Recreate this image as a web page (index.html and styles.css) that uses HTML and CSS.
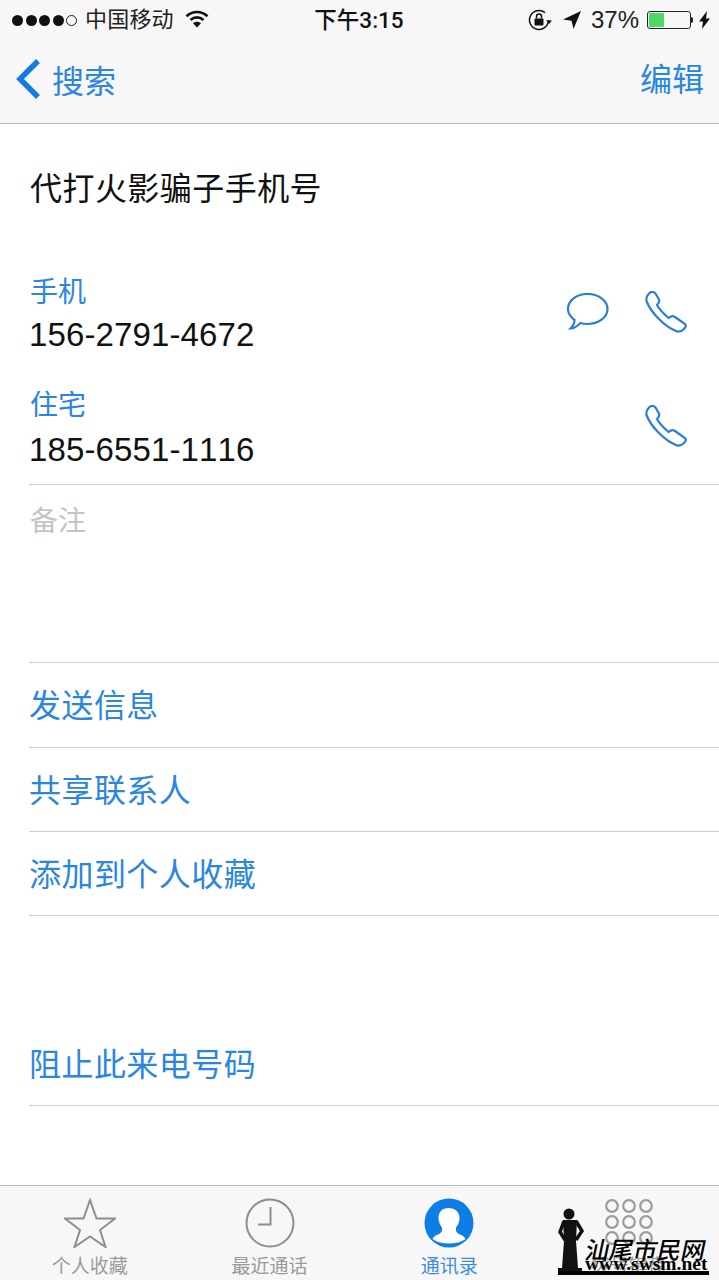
FILE: index.html
```html
<!DOCTYPE html>
<html lang="zh-CN">
<head>
<meta charset="utf-8">
<title>联系人</title>
<link rel="stylesheet" href="styles.css">
</head>
<body>
<div class="page">
  <header class="topbar">
    <div class="status">
      <div class="status-left">
        <span class="dots"><i class="dot"></i><i class="dot"></i><i class="dot"></i><i class="dot"></i><i class="dot hollow"></i></span>
        <span class="carrier">中国移动</span>
        <svg class="wifi" width="24" height="18" viewBox="0 0 24 18"><path d="M1.500 6.200C7.500.6 16.500.6 22.500 6.200" class="wifi-arc"/><path d="M5.500 10C9.300 6.500 14.700 6.500 18.500 10" class="wifi-arc"/><path d="M12 17.500 8 13.200C10.300 11.200 13.700 11.200 16 13.200Z" class="wifi-fill"/></svg>
      </div>
      <span class="time">下午3:15</span>
      <div class="status-right">
        <svg class="lock" width="24" height="22" viewBox="0 0 24 22"><path d="M20.500 11A9.500 9.500 0 1 1 17 3.600" class="lock-ring"/><path d="M18 11.500h6L21 15Z" class="ink"/><rect x="6.500" y="9.500" width="9" height="7" rx="1" class="ink"/><path d="M8.500 9.500V7.500a2.500 2.500 0 0 1 5 0v2" class="lock-ring"/></svg>
        <svg class="arrow" width="18" height="18" viewBox="0 0 18 18"><path d="M18 0 0 8.500l8.500 1.200L10.500 18Z" class="ink"/></svg>
        <span class="percent">37%</span>
        <span class="battery"><span class="battery-level"></span></span>
        <span class="battery-tip"></span>
        <svg class="bolt" width="11" height="18" viewBox="0 0 11 18"><path d="M8 0 0 10.500h4L3 18l8-10.500H7Z" class="ink"/></svg>
      </div>
    </div>
    <nav class="nav">
      <a class="back">
        <svg width="26" height="42" viewBox="0 0 26 42"><path d="M23 3 5 21l18 18" class="chevron"/></svg>
        <span>搜索</span>
      </a>
      <a class="edit">编辑</a>
    </nav>
  </header>

  <main class="main">
    <h1 class="name">代打火影骗子手机号</h1>

    <section class="phones">
      <div class="phone">
        <div class="phone-text">
          <div class="label">手机</div>
          <div class="number">156-2791-4672</div>
        </div>
        <svg class="bubble" width="42" height="38" viewBox="0 0 42 38"><path d="M20.500 1C31.500 1 40.500 7.500 40.500 16C40.500 24.500 31.500 31 20.500 31C17.500 31 15 30.600 13.500 30C10.500 33 6.500 35.500 3.500 35.500C6 33 7.500 30 7.500 27C3.500 24 1 20 1 16C1 7.500 9.500 1 20.500 1Z" class="icon-line"/></svg>
        <svg class="call" width="44" height="44" viewBox="0 0 44 44"><path d="M4 2.500C6 .5 9 .5 10.500 2.500L14 8.500C15 10.500 13.500 12.500 12 14C14 18 19 23 23.500 27C26 25 28 24.500 30 26L40 33C41.500 34.500 41 36 39 38C37 40 35 41 32 40.500C20 36 6 22 1.500 10C1 7 2 4.500 4 2.500Z" class="icon-line"/></svg>
      </div>
      <div class="phone">
        <div class="phone-text">
          <div class="label">住宅</div>
          <div class="number">185-6551-1116</div>
        </div>
        <svg class="call" width="44" height="44" viewBox="0 0 44 44"><path d="M4 2.500C6 .5 9 .5 10.500 2.500L14 8.500C15 10.500 13.500 12.500 12 14C14 18 19 23 23.500 27C26 25 28 24.500 30 26L40 33C41.500 34.500 41 36 39 38C37 40 35 41 32 40.500C20 36 6 22 1.500 10C1 7 2 4.500 4 2.500Z" class="icon-line"/></svg>
      </div>
    </section>

    <section class="notes">备注</section>

    <ul class="actions">
      <li class="action first">发送信息</li>
      <li class="action">共享联系人</li>
      <li class="action">添加到个人收藏</li>
    </ul>

    <div class="action block">阻止此来电号码</div>
  </main>

  <footer class="tabs">
    <div class="tab">
      <svg width="52" height="50" viewBox="0 0 52 50"><path d="M26 2 32.500 20.500H51L36 32 41.500 49 26 38.500 10.500 49 16 32 1 20.500H19.500Z" class="tab-line"/></svg>
      <span>个人收藏</span>
    </div>
    <div class="tab">
      <svg width="50" height="50" viewBox="0 0 50 50"><circle cx="25" cy="25" r="23.500" class="tab-line"/><path d="M25.500 9V26.500H13" class="tab-line"/></svg>
      <span>最近通话</span>
    </div>
    <div class="tab active">
      <svg width="50" height="50" viewBox="0 0 50 50"><circle cx="25" cy="25" r="24.500" class="tab-fill"/><path d="M24.500 10C18 10 14.500 14 14.500 20C14.500 24 16 27 18 29.500C18.500 33 17.500 35 14 36.500C11.500 37.500 9.500 38.500 8.500 41C12.500 44 18.500 45.500 25 45.500C31.500 45.500 37.500 44 41.500 41C40.500 38.500 38.500 37.500 36 36.500C32.500 35 31.500 33 32 29.500C34 27 35.500 24 35.500 20C35.500 14 31 10 24.500 10Z" class="person"/></svg>
      <span>通讯录</span>
    </div>
    <div class="tab">
      <svg width="50" height="50" viewBox="0 0 50 50"><g class="keypad"><circle cx="8" cy="8" r="5.800"/><circle cx="25" cy="8" r="5.800"/><circle cx="42" cy="8" r="5.800"/><circle cx="8" cy="24" r="5.800"/><circle cx="25" cy="24" r="5.800"/><circle cx="42" cy="24" r="5.800"/><circle cx="8" cy="40" r="5.800"/><circle cx="25" cy="40" r="5.800"/><circle cx="42" cy="40" r="5.800"/></g></svg>
      <span>拨号键盘</span>
    </div>
    <div class="watermark">
      <svg class="figure" width="30" height="67" viewBox="0 0 30 67"><circle cx="11" cy="6" r="5.500" class="ink"/><path d="M5 12H19L18 33 20 60H24V66H0V60H4L6 33Z" class="ink"/><path d="M6 13 2 24 7 32M18 13 24 23 18 32" class="wm-arm"/></svg>
      <div class="wm-cn">汕尾市民网</div>
      <div class="wm-url">www.swsm.net</div>
      <div class="wm-base"></div>
    </div>
  </footer>
</div>
</body>
</html>
```
FILE: styles.css
```css
* { box-sizing: border-box; }
html, body { margin: 0; padding: 0; background: #fff; }
body { font-family: "Liberation Sans", "Noto Sans CJK SC", sans-serif; color: #111; }
ul { list-style: none; margin: 0; padding: 0; }

.page { width: 719px; height: 1280px; display: flex; flex-direction: column; overflow: hidden; }

.topbar { height: 124px; background: #f7f7f7; border-bottom: 1px solid #b9b9b9; flex: none; }
.status { height: 40px; display: grid; grid-template-columns: 1fr auto 1fr; align-items: center; padding: 0 9px 0 12px; }
.status-left, .status-right { display: flex; align-items: center; }
.status-right { justify-content: flex-end; }
.dots { display: flex; gap: 2.500px; }
.dot { width: 11px; height: 11px; border-radius: 50%; background: #111; }
.dot.hollow { background: none; border: 1px solid #222; }
.carrier { margin-left: 8px; font-size: 22px; line-height: 30px; letter-spacing: .2px; color: #222; }
.wifi { margin-left: 11px; margin-top: -3px; }
.wifi-arc { fill: none; stroke: #111; stroke-width: 2.600; }
.wifi-fill, .ink { fill: #111; }
.time { font-family: Roboto, "Noto Sans CJK SC", sans-serif; font-size: 22.500px; line-height: 30px; font-weight: 500; color: #111; margin-right: 4px; }
.lock { margin-right: 11px; }
.lock-ring { fill: none; stroke: #111; stroke-width: 1.500; }
.arrow { margin-right: 10px; }
.percent { font-size: 24px; line-height: 30px; color: #222; margin-right: 8px; }
.battery { width: 44px; height: 18px; border: 1px solid #222; border-radius: 3px; padding: 1px; background: #f7f7f7; }
.battery-level { display: block; width: 15px; height: 100%; background: #4cd964; }
.battery-tip { width: 2px; height: 6px; background: #222; border-radius: 0 2px 2px 0; margin-right: 6px; }

.nav { height: 83px; display: flex; justify-content: space-between; align-items: center; padding: 0 15px 5px 15px; font-size: 32px; color: #2a86e0; }
.back { display: flex; align-items: center; gap: 11px; }
.chevron { fill: none; stroke: #1579e4; stroke-width: 5.500; }
.edit { line-height: 42px; padding-top: 2px; }

.main { flex: 1; min-height: 0; padding-left: 29px; }
.name { margin: 0; padding: 45px 0 62px 1px; font-size: 32px; line-height: 40px; font-weight: 400; letter-spacing: .45px; color: #111; }

.phones { display: flex; flex-direction: column; gap: 26px; border-bottom: 1px solid #cfcfcf; padding-bottom: 11px; }
.phone { display: flex; align-items: center; height: 88px; padding-right: 30px; }
.phone-text { flex: 1; padding-top: 2px; }
.label { font-size: 28px; line-height: 40px; color: #2a86e0; padding-left: 1px; }
.number { font-size: 33px; line-height: 48px; font-kerning: none; letter-spacing: .12px; color: #111; margin-top: -2px; }
.phone + .phone .number { margin-top: 0; }
.bubble { margin-right: 36px; margin-top: -6px; }
.call { margin-top: -4px; }
.icon-line { fill: none; stroke: #2a7ddb; stroke-width: 2.200; }

.notes { height: 178px; padding: 17px 0 0 1px; font-size: 28px; line-height: 40px; color: #c4c4c8; border-bottom: 1px solid #cfcfcf; }

.action { height: 84px; display: flex; align-items: center; border-bottom: 1px solid #cfcfcf; font-size: 32px; letter-spacing: .45px; color: #2a86e0; padding-bottom: 4px; }
.action.first { height: 85px; }
.block { margin-top: 106px; }

.tabs { position: relative; height: 95px; flex: none; background: #f7f7f7; border-top: 1px solid #b9b9b9; display: grid; grid-template-columns: repeat(4, 1fr); }
.tab { display: flex; flex-direction: column; align-items: center; padding-top: 12px; font-size: 19px; line-height: 26px; color: #9a9a9a; }
.tab svg { display: block; height: 50px; margin-bottom: 6px; }
.tab.active { color: #3d8ddd; }
.tab-line { fill: none; stroke: #8e8e8e; stroke-width: 2; }
.keypad { fill: none; stroke: #9c9c9c; stroke-width: 2.200; }
.tab-fill { fill: #0d7ee8; }
.person { fill: #fff; }

.watermark { position: absolute; right: 10px; bottom: 5px; width: 151px; height: 67px; color: #000; }
.figure { position: absolute; left: 0; top: 0; }
.wm-arm { fill: none; stroke: #111; stroke-width: 3.500; }
.wm-cn { position: absolute; left: 28px; top: 27px; font-family: "Noto Sans CJK SC", sans-serif; font-size: 24px; line-height: 28px; font-weight: 500; white-space: nowrap; transform: skewX(-12deg); }
.wm-url { position: absolute; left: 27px; top: 49px; font-family: "Liberation Serif", serif; font-size: 19.500px; line-height: 14px; font-weight: 700; white-space: nowrap; }
.wm-base { position: absolute; left: 0; right: 0; bottom: 0; height: 4px; background: #000; }
```
